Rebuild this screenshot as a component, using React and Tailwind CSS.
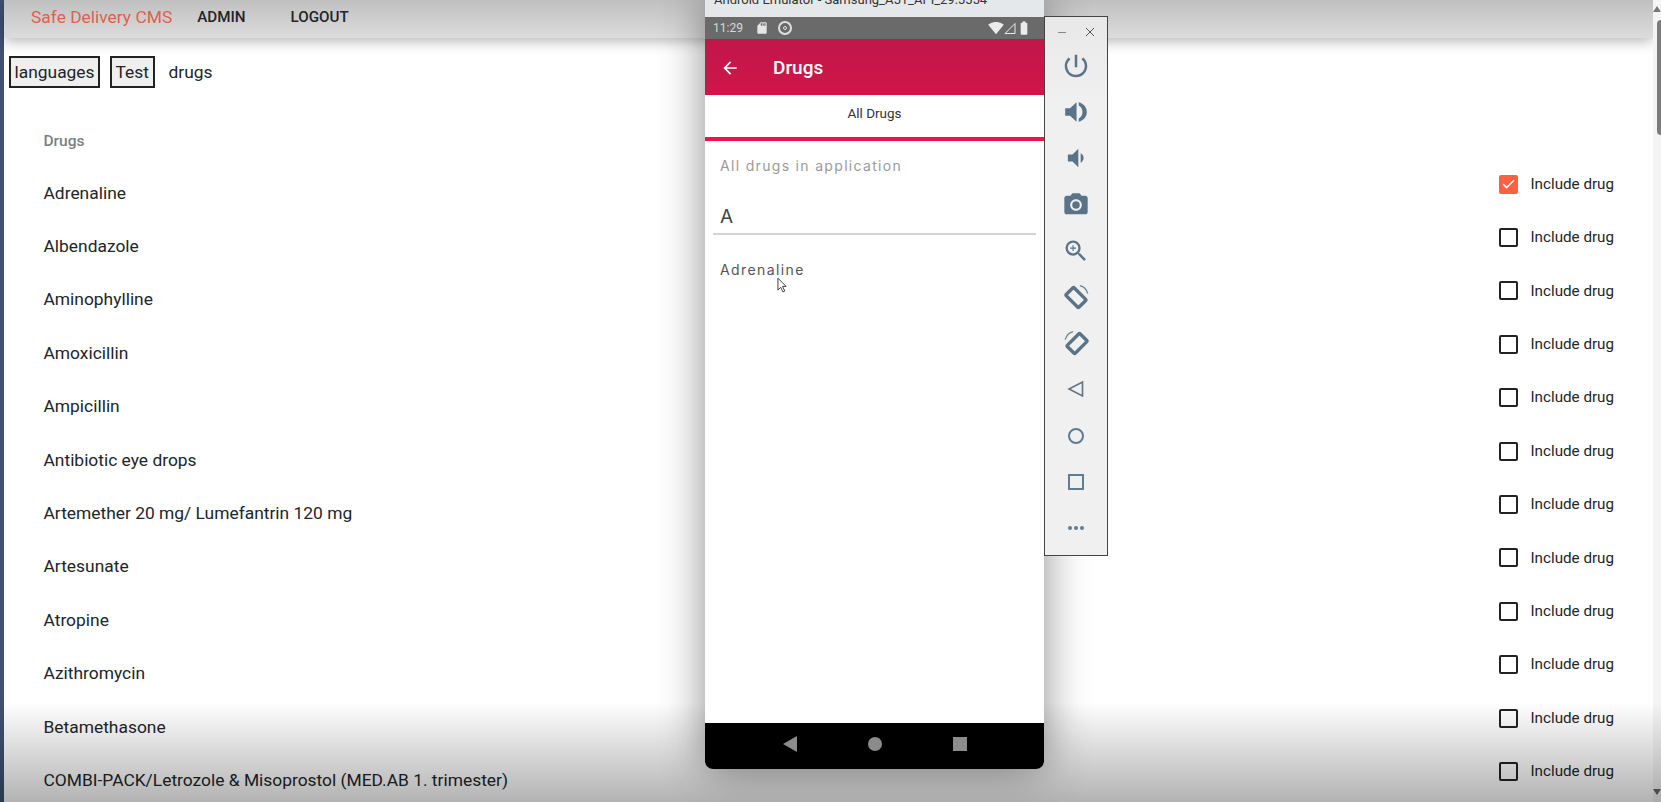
import { MdArrowBack, MdPowerSettingsNew, MdVolumeDown, MdPhotoCamera, MdZoomIn, MdSdCard, MdSignalWifi4Bar, MdBatteryStd } from "react-icons/md";
import { Check } from "lucide-react";

const drugs = [
  "Adrenaline",
  "Albendazole",
  "Aminophylline",
  "Amoxicillin",
  "Ampicillin",
  "Antibiotic eye drops",
  "Artemether 20 mg/ Lumefantrin 120 mg",
  "Artesunate",
  "Atropine",
  "Azithromycin",
  "Betamethasone",
  "COMBI-PACK/Letrozole & Misoprostol (MED.AB 1. trimester)",
];

// speaker with a single arc, the emulator's volume up glyph
function VolumeUpIcon() {
  return (
    <svg viewBox="0 0 24 24" className="w-[26px] h-[26px]" fill="#5a7387">
      <path d="M2 8.500v7h4.500l6 5.500V3L6.500 8.500z" />
      <path d="M14.500 3c4.500 1.300 7.500 4.500 7.500 9s-3 7.700-7.500 9v-3c2-1 3.500-3.300 3.500-6s-1.500-5-3.500-6z" />
    </svg>
  );
}

function RotateIcon({ flip }) {
  return (
    <svg viewBox="0 0 24 24" className={flip ? "w-[27px] h-[27px] -scale-x-100" : "w-[27px] h-[27px]"} fill="none">
      <rect x="6.500" y="4" width="10" height="16" rx="1" transform="rotate(-45 11.500 12)" stroke="#5a7387" strokeWidth="3" />
      <path d="M15 1.500c3.500 .8 6 3.500 7 7" stroke="#6f8697" strokeWidth="1.200" />
    </svg>
  );
}

function ToolbarIcons() {
  const color = "text-[#5a7387]";
  return (
    <div className="flex flex-col items-center">
      <div className="h-[46.200px] flex items-center"><MdPowerSettingsNew className={`w-[30px] h-[30px] ${color}`} /></div>
      <div className="h-[46.200px] flex items-center"><VolumeUpIcon /></div>
      <div className="h-[46.200px] flex items-center"><MdVolumeDown className={`w-7 h-7 ${color}`} /></div>
      <div className="h-[46.200px] flex items-center"><MdPhotoCamera className={`w-7 h-7 ${color}`} /></div>
      <div className="h-[46.200px] flex items-center"><MdZoomIn className={`w-7 h-7 ${color}`} /></div>
      <div className="h-[46.200px] flex items-center"><RotateIcon /></div>
      <div className="h-[46.200px] flex items-center"><RotateIcon flip /></div>
      <div className="h-[46.200px] flex items-center">
        <svg viewBox="0 0 18 18" className="w-[18px] h-[18px]" fill="none" stroke="#5f7381" strokeWidth="1.600"><path d="M15.500 2v14L2 9z" /></svg>
      </div>
      <div className="h-[46.200px] flex items-center">
        <div className="w-4 h-4 rounded-full border-2 border-[#5f7c90]" />
      </div>
      <div className="h-[46.200px] flex items-center">
        <div className="w-4 h-4 border-2 border-[#5f7c90]" />
      </div>
      <div className="h-[46.200px] flex items-center gap-[2px]">
        <div className="w-1 h-1 rounded-full bg-[#5f7c90]" />
        <div className="w-1 h-1 rounded-full bg-[#5f7c90]" />
        <div className="w-1 h-1 rounded-full bg-[#5f7c90]" />
      </div>
    </div>
  );
}

function Phone() {
  return (
    <div className="absolute left-[705px] top-0 w-[339px] h-[769px] flex flex-col bg-white rounded-b-lg shadow-[0_0_45px_rgba(0,0,0,0.45)] overflow-hidden">
      <div className="h-[17px] shrink-0 bg-[#e4e8ea] px-[9px] pb-[9px] flex items-end text-[13px] leading-4 text-[#333] whitespace-nowrap">
        Android Emulator - Samsung_A51_API_29:5554
      </div>
      <div className="h-[22px] shrink-0 bg-[#6a6a6a] flex items-center px-2 text-[#d8d8d8] text-[12px]">
        <span>11:29</span>
        <MdSdCard className="w-3.5 h-3.5 ml-3 text-[#e6e6e6]" />
        <div className="w-3.5 h-3.5 ml-[9px] rounded-full border-2 border-[#e0e0e0] flex items-center justify-center">
          <div className="w-1 h-1 rounded-full border border-[#e0e0e0]" />
        </div>
        <div className="ml-auto flex items-center text-[#ececec] pr-1">
          <MdSignalWifi4Bar className="w-4 h-4" />
          <svg viewBox="0 0 12 12" className="w-3 h-3" fill="none" stroke="#ececec"><path d="M1 11.500L11 1.500v10z" /></svg>
          <MdBatteryStd className="w-4 h-4" />
        </div>
      </div>
      <div className="h-[56px] shrink-0 bg-gradient-to-b from-[#c2164a] to-[#cf1649] flex items-center text-white pl-[15px] pt-[2px]">
        <MdArrowBack className="w-5 h-5" />
        <span className="ml-[33px] text-[19px] font-medium">Drugs</span>
      </div>
      <div className="h-[42px] shrink-0 flex items-center justify-center pb-[6px] text-[13.500px] text-[#333]">All Drugs</div>
      <div className="h-1 shrink-0 bg-[#f0124d]" />
      <div className="flex-1 flex flex-col font-['Inter',sans-serif]">
        <p className="mt-[17px] px-[15px] text-[14px] leading-4 tracking-[1.320px] text-[#9a9a9a]">All drugs in application</p>
        <div className="mx-[8px] mt-[24px] h-[37px] px-[7px] pb-[4px] flex items-end border-b-2 border-[#d4d4d4] text-[19px] leading-6 text-[#444]">A</div>
        <p className="mt-[27px] px-[15px] text-[14px] leading-4 tracking-[1.400px] text-[#555]">Adrenaline</p>
      </div>
      <div className="h-[46px] shrink-0 bg-black flex items-center justify-center gap-[71px] pb-1">
        <svg viewBox="0 0 14 16" className="w-[14px] h-4" fill="#8c8c8c"><path d="M14 0v16L0 8z" /></svg>
        <div className="w-[14px] h-[14px] rounded-full bg-[#8c8c8c]" />
        <div className="w-[14px] h-[14px] bg-[#8c8c8c]" />
      </div>
      <svg viewBox="0 0 12 18" className="absolute left-[72px] top-[277px] w-[11px] h-[17px]" fill="white" stroke="#333"><path d="M1 1v13l3-3 2.500 5 2-1-2.500-5h4z" /></svg>
    </div>
  );
}

export default function App() {
  return (
    <div className="relative h-screen overflow-hidden flex bg-white font-['Roboto',sans-serif] text-[17.400px] text-[#212529]">
      <div className="w-1 shrink-0 bg-[#3f5070]" />

      <div className="flex-1 min-w-0">
        <header className="h-[38px] flex items-center pl-[27px] pb-1 bg-gradient-to-b from-[#c0c0c0] to-[#dcdcdc] shadow-[0_3px_14px_rgba(0,0,0,0.3)]">
          <span className="text-[#e0604c]">Safe Delivery CMS</span>
          <span className="ml-[25px] text-[15.200px] font-medium">ADMIN</span>
          <span className="ml-[45px] text-[15.200px] font-medium">LOGOUT</span>
        </header>

        <div className="flex items-center mt-[18px] ml-[5px]">
          <button className="h-[32px] px-[3.500px] border-2 border-[#222] bg-[#efefef]">languages</button>
          <button className="h-[32px] px-[3.500px] ml-[10px] border-2 border-[#222] bg-[#efefef]">Test</button>
          <span className="ml-[14px]">drugs</span>
        </div>

        <div className="mt-[29px] pl-[39.500px] pr-[39px]">
          <div className="h-[49px] flex items-center text-[15.500px] font-medium text-[#7a7f85]">Drugs</div>
          {drugs.map((drug, i) => (
            <div key={drug} className="h-[53.400px] flex items-center justify-between">
              <span>{drug}</span>
              <label className="flex items-center gap-[12px] pb-[17px] text-[15.200px]">
                {i === 0 ? (
                  <span className="w-[19px] h-[19px] rounded-[2px] bg-[#ff6140] flex items-center justify-center">
                    <Check className="w-[15px] h-[15px] text-white" strokeWidth={2.500} />
                  </span>
                ) : (
                  <span className="w-[19px] h-[19px] rounded-[2px] border-2 border-[#222]" />
                )}
                Include drug
              </label>
            </div>
          ))}
        </div>
      </div>

      <div className="w-2 shrink-0 relative bg-[#f4f4f4]">
        <svg viewBox="0 0 8 6" className="absolute right-0 top-[6px] w-2 h-[6px]" fill="#777"><path d="M4 0l4 6H0z" /></svg>
        <div className="absolute right-0 top-[20px] w-1 h-[115px] rounded-l-sm bg-[#7b7b7b]" />
        <svg viewBox="0 0 8 6" className="absolute right-0 bottom-[7px] w-2 h-[6px]" fill="#666"><path d="M0 0h8L4 6z" /></svg>
      </div>

      {/* bottom fade of the video frame */}
      <div className="absolute inset-x-0 bottom-0 h-[100px] pointer-events-none bg-gradient-to-b from-transparent to-black/30" />

      <Phone />

      <div className="absolute left-[1044px] top-[16px] w-[64px] h-[540px] border border-[#444] bg-gradient-to-b from-[#e8e8e8] to-[#f0f0f0] to-[15%]">
        <div className="h-[26px] flex items-center justify-end gap-[20px] pr-[13px] pt-1 text-[#666]">
          <div className="w-2 h-px bg-[#888]" />
          <svg viewBox="0 0 8 8" className="w-2 h-2" stroke="#556" strokeWidth="1"><path d="M0 0l8 8M8 0L0 8" /></svg>
        </div>
        <ToolbarIcons />
      </div>
    </div>
  );
}
